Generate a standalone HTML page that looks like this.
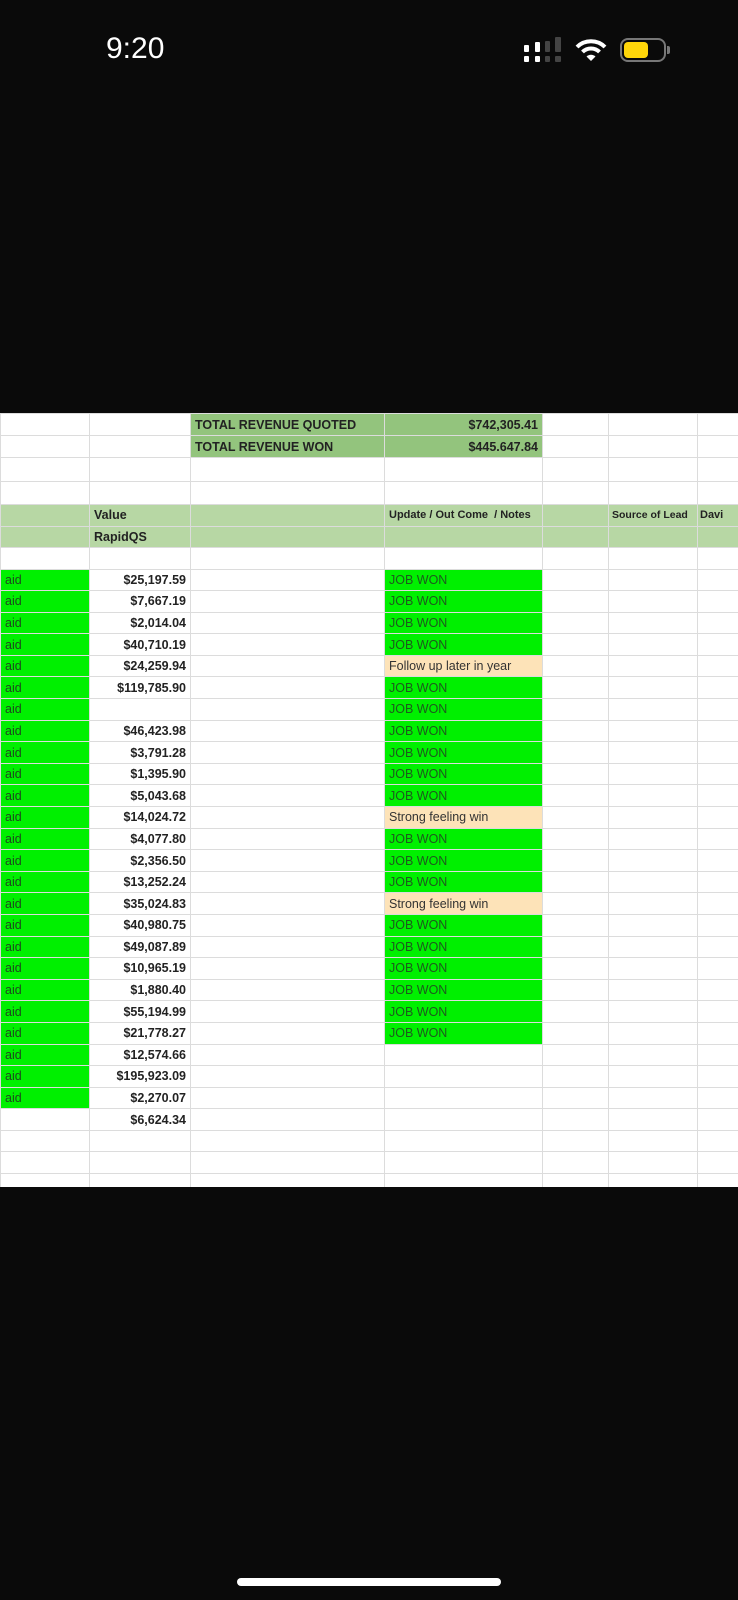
<!DOCTYPE html>
<html><head><meta charset="utf-8"><style>
*{margin:0;padding:0;box-sizing:border-box}
body{width:738px;height:1600px;background:#0a0a0a;position:relative;overflow:hidden;font-family:"Liberation Sans",Arial,sans-serif}
#sheet{position:absolute;left:0;top:413px;width:738px;height:774px;background:#fff;overflow:hidden}
table{border-collapse:collapse;table-layout:fixed;position:absolute;left:0;top:0;width:740px}
td{border:1px solid #dcdcdc;font-size:12.5px;padding:0 4px;white-space:nowrap;overflow:hidden;color:#222;font-weight:bold}
td.b{text-align:right;border-right:1px dashed #888}
.g{background:#00f000;color:#1d5a1d;font-weight:normal}
.ga{background:#00f000;color:#1d4a1d;font-weight:normal}
.pe{background:#fde3b8;color:#333;font-weight:normal}
.h{background:#b7d7a4;font-size:11px}
.t{background:#93c47d;font-size:12.5px;font-weight:bold;color:#222}
</style></head><body>
<div style="position:absolute;left:106px;top:32px;color:#fff;font-size:30px">9:20</div>
<div style="position:absolute;left:524px;top:45px;width:5px;height:7px;background:#fff;border-radius:1px"></div>
<div style="position:absolute;left:524px;top:56px;width:5px;height:6px;background:#fff;border-radius:1px"></div>
<div style="position:absolute;left:535px;top:42px;width:5px;height:10px;background:#fff;border-radius:1px"></div>
<div style="position:absolute;left:535px;top:56px;width:5px;height:6px;background:#fff;border-radius:1px"></div>
<div style="position:absolute;left:545px;top:41px;width:5px;height:11px;background:#444;border-radius:1px"></div>
<div style="position:absolute;left:545px;top:56px;width:5px;height:6px;background:#444;border-radius:1px"></div>
<div style="position:absolute;left:555px;top:37px;width:6px;height:15px;background:#444;border-radius:1px"></div>
<div style="position:absolute;left:555px;top:56px;width:6px;height:6px;background:#444;border-radius:1px"></div>
<svg style="position:absolute;left:574px;top:38px" width="34" height="24" viewBox="0 0 34 24"><path d="M3 9 A20 20 0 0 1 31 9" stroke="#fff" stroke-width="4" fill="none"/><path d="M8.5 14 A12 12 0 0 1 25.5 14" stroke="#fff" stroke-width="4" fill="none"/><path d="M12.5 18.5 L17 23 L21.5 18.5 A6.5 6.5 0 0 0 12.5 18.5Z" fill="#fff"/></svg>
<div style="position:absolute;left:620px;top:38px;width:46px;height:24px;border:2px solid #777;border-radius:8px"><div style="position:absolute;left:2px;top:2px;width:24px;height:16px;background:#ffd60a;border-radius:4px"></div></div>
<div style="position:absolute;left:667px;top:46px;width:3px;height:8px;background:#777;border-radius:0 2px 2px 0"></div>
<div id="sheet"><table>
<colgroup><col style="width:89px"><col style="width:101px"><col style="width:194px"><col style="width:158px"><col style="width:66px"><col style="width:89px"><col style="width:43px"></colgroup>
<tr style="height:22px"><td></td><td></td><td class="t">TOTAL REVENUE QUOTED</td><td class="t" style="text-align:right">$742,305.41</td><td></td><td></td><td></td></tr>
<tr style="height:22px"><td></td><td></td><td class="t">TOTAL REVENUE WON</td><td class="t" style="text-align:right">$445.647.84</td><td></td><td></td><td></td></tr>
<tr style="height:23.5px"><td></td><td></td><td></td><td></td><td></td><td></td><td></td></tr>
<tr style="height:23.5px"><td></td><td></td><td></td><td></td><td></td><td></td><td></td></tr>
<tr style="height:21.5px"><td class="h"></td><td class="h" style="font-size:12.5px">Value</td><td class="h"></td><td class="h">Update / Out Come &nbsp;/ Notes</td><td class="h"></td><td class="h" style="padding-left:3px;font-size:10.5px">Source of Lead</td><td class="h" style="padding-left:2px">Davi</td></tr>
<tr style="height:21.5px"><td class="h"></td><td class="h" style="font-size:12.5px">RapidQS</td><td class="h"></td><td class="h"></td><td class="h"></td><td class="h"></td><td class="h"></td></tr>
<tr style="height:21.5px"><td></td><td></td><td></td><td></td><td></td><td></td><td></td></tr>
<tr style="height:21.6px"><td class="ga">aid</td><td class="b">$25,197.59</td><td></td><td class="g">JOB WON</td><td></td><td></td><td></td></tr>
<tr style="height:21.6px"><td class="ga">aid</td><td class="b">$7,667.19</td><td></td><td class="g">JOB WON</td><td></td><td></td><td></td></tr>
<tr style="height:21.6px"><td class="ga">aid</td><td class="b">$2,014.04</td><td></td><td class="g">JOB WON</td><td></td><td></td><td></td></tr>
<tr style="height:21.6px"><td class="ga">aid</td><td class="b">$40,710.19</td><td></td><td class="g">JOB WON</td><td></td><td></td><td></td></tr>
<tr style="height:21.6px"><td class="ga">aid</td><td class="b">$24,259.94</td><td></td><td class="pe">Follow up later in year</td><td></td><td></td><td></td></tr>
<tr style="height:21.6px"><td class="ga">aid</td><td class="b">$119,785.90</td><td></td><td class="g">JOB WON</td><td></td><td></td><td></td></tr>
<tr style="height:21.6px"><td class="ga">aid</td><td class="b"></td><td></td><td class="g">JOB WON</td><td></td><td></td><td></td></tr>
<tr style="height:21.6px"><td class="ga">aid</td><td class="b">$46,423.98</td><td></td><td class="g">JOB WON</td><td></td><td></td><td></td></tr>
<tr style="height:21.6px"><td class="ga">aid</td><td class="b">$3,791.28</td><td></td><td class="g">JOB WON</td><td></td><td></td><td></td></tr>
<tr style="height:21.6px"><td class="ga">aid</td><td class="b">$1,395.90</td><td></td><td class="g">JOB WON</td><td></td><td></td><td></td></tr>
<tr style="height:21.6px"><td class="ga">aid</td><td class="b">$5,043.68</td><td></td><td class="g">JOB WON</td><td></td><td></td><td></td></tr>
<tr style="height:21.6px"><td class="ga">aid</td><td class="b">$14,024.72</td><td></td><td class="pe">Strong feeling win</td><td></td><td></td><td></td></tr>
<tr style="height:21.6px"><td class="ga">aid</td><td class="b">$4,077.80</td><td></td><td class="g">JOB WON</td><td></td><td></td><td></td></tr>
<tr style="height:21.6px"><td class="ga">aid</td><td class="b">$2,356.50</td><td></td><td class="g">JOB WON</td><td></td><td></td><td></td></tr>
<tr style="height:21.6px"><td class="ga">aid</td><td class="b">$13,252.24</td><td></td><td class="g">JOB WON</td><td></td><td></td><td></td></tr>
<tr style="height:21.6px"><td class="ga">aid</td><td class="b">$35,024.83</td><td></td><td class="pe">Strong feeling win</td><td></td><td></td><td></td></tr>
<tr style="height:21.6px"><td class="ga">aid</td><td class="b">$40,980.75</td><td></td><td class="g">JOB WON</td><td></td><td></td><td></td></tr>
<tr style="height:21.6px"><td class="ga">aid</td><td class="b">$49,087.89</td><td></td><td class="g">JOB WON</td><td></td><td></td><td></td></tr>
<tr style="height:21.6px"><td class="ga">aid</td><td class="b">$10,965.19</td><td></td><td class="g">JOB WON</td><td></td><td></td><td></td></tr>
<tr style="height:21.6px"><td class="ga">aid</td><td class="b">$1,880.40</td><td></td><td class="g">JOB WON</td><td></td><td></td><td></td></tr>
<tr style="height:21.6px"><td class="ga">aid</td><td class="b">$55,194.99</td><td></td><td class="g">JOB WON</td><td></td><td></td><td></td></tr>
<tr style="height:21.6px"><td class="ga">aid</td><td class="b">$21,778.27</td><td></td><td class="g">JOB WON</td><td></td><td></td><td></td></tr>
<tr style="height:21.6px"><td class="ga">aid</td><td class="b">$12,574.66</td><td></td><td></td><td></td><td></td><td></td></tr>
<tr style="height:21.6px"><td class="ga">aid</td><td class="b">$195,923.09</td><td></td><td></td><td></td><td></td><td></td></tr>
<tr style="height:21.6px"><td class="ga">aid</td><td class="b">$2,270.07</td><td></td><td></td><td></td><td></td><td></td></tr>
<tr style="height:21.6px"><td></td><td class="b">$6,624.34</td><td></td><td></td><td></td><td></td><td></td></tr>
<tr style="height:21.5px"><td></td><td class="b"></td><td></td><td></td><td></td><td></td><td></td></tr>
<tr style="height:21.5px"><td></td><td class="b"></td><td></td><td></td><td></td><td></td><td></td></tr>
<tr style="height:21.5px"><td></td><td class="b"></td><td></td><td></td><td></td><td></td><td></td></tr>
</table></div>
<div style="position:absolute;left:237px;top:1578px;width:264px;height:8px;background:#fff;border-radius:4px"></div>
</body></html>
